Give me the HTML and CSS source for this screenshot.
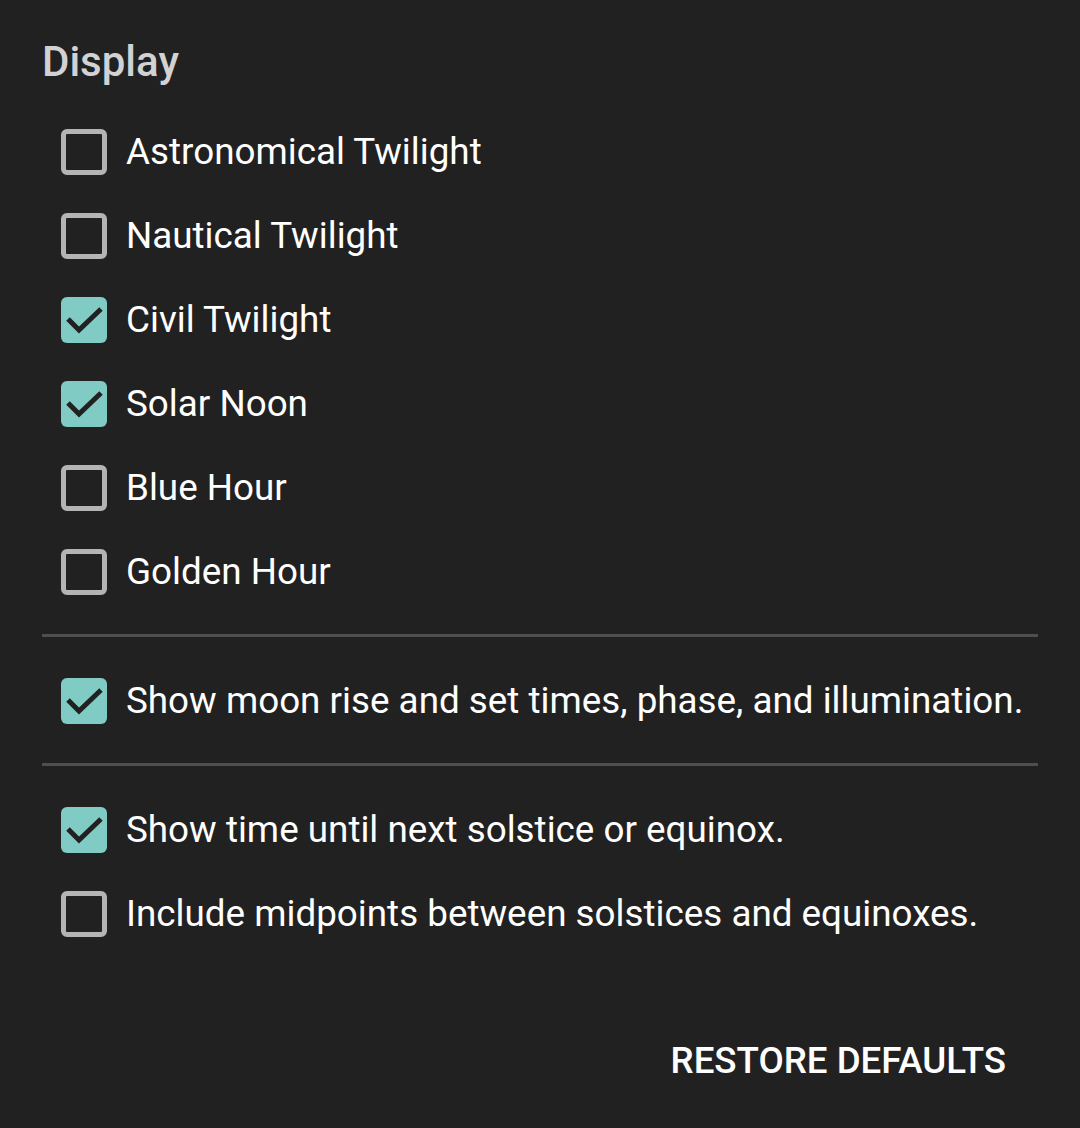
FILE: index.html
```html
<!DOCTYPE html>
<html lang="en">
<head>
<meta charset="utf-8">
<title>Display</title>
<link rel="stylesheet" href="styles.css">
</head>
<body>
<div class="panel">
  <h2 class="heading">Display</h2>
  <div class="group">
    <label class="row"><span class="box"></span><span class="label">Astronomical Twilight</span></label>
    <label class="row"><span class="box"></span><span class="label">Nautical Twilight</span></label>
    <label class="row"><span class="box checked"><svg viewBox="0 0 46 46" width="46" height="46"><path d="M7 22 L18 33 L40 12" /></svg></span><span class="label">Civil Twilight</span></label>
    <label class="row"><span class="box checked"><svg viewBox="0 0 46 46" width="46" height="46"><path d="M7 22 L18 33 L40 12" /></svg></span><span class="label">Solar Noon</span></label>
    <label class="row"><span class="box"></span><span class="label">Blue Hour</span></label>
    <label class="row"><span class="box"></span><span class="label">Golden Hour</span></label>
  </div>
  <hr class="divider">
  <div class="group">
    <label class="row"><span class="box checked"><svg viewBox="0 0 46 46" width="46" height="46"><path d="M7 22 L18 33 L40 12" /></svg></span><span class="label">Show moon rise and set times, phase, and illumination.</span></label>
  </div>
  <hr class="divider">
  <div class="group">
    <label class="row"><span class="box checked"><svg viewBox="0 0 46 46" width="46" height="46"><path d="M7 22 L18 33 L40 12" /></svg></span><span class="label">Show time until next solstice or equinox.</span></label>
    <label class="row"><span class="box"></span><span class="label">Include midpoints between solstices and equinoxes.</span></label>
  </div>
  <div class="actions">
    <button class="text-btn">RESTORE DEFAULTS</button>
  </div>
</div>
</body>
</html>
```
FILE: styles.css
```css
html, body {
  margin: 0;
  padding: 0;
  background: #212121;
}
body {
  font-family: Roboto, "Noto Sans", "Liberation Sans", sans-serif;
  color: #ffffff;
}
.panel {
  width: 1080px;
  height: 1128px;
  box-sizing: border-box;
  padding: 38px 42px 0 42px;
}
.heading {
  margin: 0 0 24px 0;
  font-size: 42px;
  line-height: 48px;
  font-weight: 500;
  color: #d2d2d2;
}
.group {
  display: flex;
  flex-direction: column;
}
.row {
  display: flex;
  align-items: center;
  height: 84px;
  padding-left: 19px;
  gap: 19px;
}
.box {
  width: 46px;
  height: 46px;
  box-sizing: border-box;
  border: 5px solid #b4b4b4;
  border-radius: 6px;
  flex: none;
}
.box.checked {
  background: #80cbc4;
  border: none;
}
.box svg {
  display: block;
}
.box svg path {
  fill: none;
  stroke: #212121;
  stroke-width: 5;
}
.label {
  font-size: 36.8px;
  line-height: 84px;
  color: #ffffff;
  white-space: nowrap;
}
.divider {
  margin: 20px 0 22px 0;
  border: none;
  height: 3px;
  background: #4f4f4f;
}
.actions {
  display: flex;
  justify-content: flex-end;
  margin-top: 81px;
  padding-right: 32px;
}
.text-btn {
  background: none;
  border: none;
  padding: 0;
  font-family: Roboto, "Noto Sans", "Liberation Sans", sans-serif;
  font-size: 36.7px;
  line-height: 48px;
  font-weight: 500;
  color: #ffffff;
}
```
